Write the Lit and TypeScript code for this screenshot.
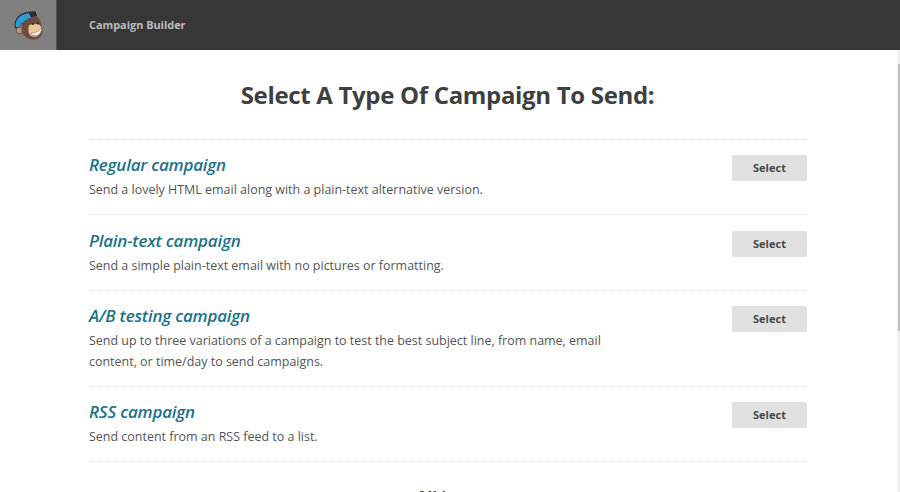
import { LitElement, html, css, svg } from "lit";
import { customElement } from "lit/decorators.js";

const items = [
  { t: "Regular campaign", d: ["Send a lovely HTML email along with a plain-text alternative version."] },
  { t: "Plain-text campaign", d: ["Send a simple plain-text email with no pictures or formatting."] },
  { t: "A/B testing campaign", d: ["Send up to three variations of a campaign to test the best subject line, from name, email", "content, or time/day to send campaigns."] },
  { t: "RSS campaign", d: ["Send content from an RSS feed to a list."] },
];

const logo = svg`<svg width="56" height="50" viewBox="0 0 56 50" xmlns="http://www.w3.org/2000/svg">
  <path d="M15 28 C13.500 23 16 17 21 14 C26 11.800 31 11 35.500 11.500 L37 15.500 L30 20 L20 25 L17 29 Z" fill="#2a2f38"/>
  <path d="M15.800 27 C15 22.500 17.500 17.500 21.500 15.300 C24.500 13.800 27 13.200 29 13.200 L31 17.800 L22 23 L17.800 27.500 Z" fill="#2b9ad6"/>
  <circle cx="19.500" cy="30.500" r="3.300" fill="#bf9672" stroke="#6a4d3f" stroke-width="1"/>
  <path d="M22 24 C26 19 34 15.500 37 16.500 C40.500 20 42.500 26 42.500 32 C42 37 37.500 40 32 39.500 C26.500 39 22.500 35 21.500 31 Z" fill="#6d4c40"/>
  <path d="M28.500 27 C29 24 32 23.500 33.500 25 C35.500 22.500 40 24 41.500 27.500 C42 31 40.500 35 36.500 36.500 C32.500 37.500 29 35.500 28.500 32 Z" fill="#e6c79c"/>
  <path d="M30.500 33 C34 33.500 38.500 31.500 41.500 28 C41.800 31.500 40 34.500 36.500 35.500 C33.500 36 31.500 35 30.500 33 Z" fill="#fbf7ee" stroke="#6d4c40" stroke-width=".5"/>
  <circle cx="32.500" cy="24" r=".9" fill="#2f2119"/>
  <circle cx="37.500" cy="23.500" r=".9" fill="#2f2119"/>
</svg>`;

@customElement("app-root")
export class AppRoot extends LitElement {
  static styles = css`
    :host {
      display: block;
      width: 900px;
      height: 492px;
      overflow: hidden;
      position: relative;
      background: #fff;
      font-family: "Open Sans", "Noto Sans", sans-serif;
      color: #555;
    }
    .bar {
      height: 50px;
      background: #373737;
      display: flex;
      align-items: center;
    }
    .logo {
      width: 57px;
      height: 50px;
      background: #808080;
      border-right: 1px solid #555;
      box-sizing: border-box;
      flex: none;
    }
    .logo svg { display: block; }
    .crumb {
      margin-left: 32px;
      padding-bottom: 2px;
      font-size: 10.900px;
      font-weight: 700;
      color: #bdbdbd;
    }
    main {
      width: 719px;
      margin-left: 88px;
    }
    h1 {
      margin: 0;
      height: 90px;
      box-sizing: border-box;
      padding-top: 27px;
      text-align: center;
      font-size: 24px;
      letter-spacing: -0.32px;
      line-height: 36px;
      font-weight: 700;
      color: #3f3f3f;
      border-bottom: 1px dotted #dcdcdc;
    }
    .row {
      display: flex;
      justify-content: space-between;
      align-items: flex-start;
      padding: 14.400px 0 13.950px 1px;
      border-bottom: 1px dotted #dcdcdc;
    }
    h2 {
      margin: 0;
      font-size: 17px;
      letter-spacing: -0.22px;
      line-height: 22px;
      font-weight: 600;
      font-style: italic;
      color: #1c7287;
    }
    p {
      margin: 3px 0 0;
      font-size: 12.470px;
      line-height: 21px;
      color: #555;
    }
    button {
      all: unset;
      width: 75px;
      height: 26px;
      margin-top: 1px;
      background: #e0e0e0;
      border-radius: 2px;
      text-align: center;
      font-size: 11px;
      line-height: 26px;
      font-weight: 700;
      color: #4a4a4a;
    }
    .more {
      margin-top: 24px;
      padding-left: 12px;
      text-align: center;
      font-size: 16px;
      line-height: 22px;
      font-weight: 700;
      color: #3f3f3f;
    }
    .track {
      position: absolute;
      right: 0;
      top: 50px;
      bottom: 0;
      width: 3px;
      background: #f1f1f1;
    }
    .thumb {
      position: absolute;
      top: 14px;
      right: 0;
      width: 2px;
      height: 267px;
      background: #c1c1c1;
    }
  `;

  render() {
    return html`
      <div class="bar">
        <div class="logo">${logo}</div>
        <div class="crumb">Campaign Builder</div>
      </div>
      <main>
        <h1>Select A Type Of Campaign To Send:</h1>
        ${items.map(
          (i) => html`<div class="row">
            <div>
              <h2>${i.t}</h2>
              <p>${i.d.map((l, n) => html`${n ? html`<br />` : ""}${l}`)}</p>
            </div>
            <button>Select</button>
          </div>`
        )}
        <div class="more">All in one</div>
      </main>
      <div class="track"><div class="thumb"></div></div>
    `;
  }
}
